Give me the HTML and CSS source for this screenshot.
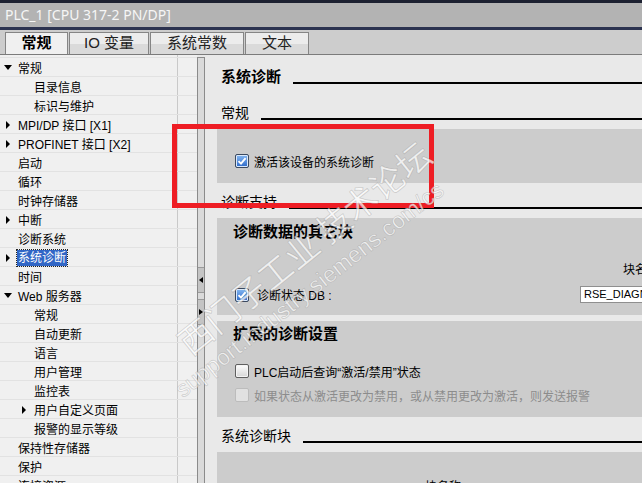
FILE: index.html
```html
<!DOCTYPE html>
<html lang="zh-CN">
<head>
    <meta charset="UTF-8">
    <meta name="viewport" content="width=device-width, initial-scale=1.0">
    <title>PLC_1 属性</title>
    <link rel="stylesheet" href="styles.css">
</head>
<body>
    <div id="win">
        <div class="title">PLC_1 [CPU 317-2 PN/DP]</div>
        <ul class="tabs">
            <li class="on tab-gen">常规</li>
            <li class="tab-io">IO 变量</li>
            <li class="tab-const">系统常数</li>
            <li class="tab-text">文本</li>
        </ul>

        <div class="main">
            <ul class="tree">
                <li><i class="down"></i>常规</li>
                <li class="l1"><i></i>目录信息</li>
                <li class="l1"><i></i>标识与维护</li>
                <li><i class="right"></i>MPI/DP 接口 [X1]</li>
                <li><i class="right"></i>PROFINET 接口 [X2]</li>
                <li><i></i>启动</li>
                <li><i></i>循环</li>
                <li><i></i>时钟存储器</li>
                <li><i class="right"></i>中断</li>
                <li><i></i>诊断系统</li>
                <li><i class="right"></i><span class="sel">系统诊断</span></li>
                <li><i></i>时间</li>
                <li><i class="down"></i>Web 服务器</li>
                <li class="l1"><i></i>常规</li>
                <li class="l1"><i></i>自动更新</li>
                <li class="l1"><i></i>语言</li>
                <li class="l1"><i></i>用户管理</li>
                <li class="l1"><i></i>监控表</li>
                <li class="l1"><i class="right"></i>用户自定义页面</li>
                <li class="l1"><i></i>报警的显示等级</li>
                <li><i></i>保持性存储器</li>
                <li><i></i>保护</li>
                <li><i></i>连接资源</li>
            </ul>

            <div class="split">
                <span class="sbtn"><i class="left"></i></span>
                <span class="sbtn"><i class="rgt"></i></span>
            </div>

            <div class="content">
                <div class="sec first"><b>系统诊断</b><span class="rule"></span></div>
                <div class="sec gap"><span>常规</span><span class="rule"></span></div>
                <div class="panel p1">
                    <div class="chk">
                        <span class="cb on"><svg viewBox="0 0 12 12"><path d="M2.5 6.2 L5 8.7 L9.6 3.2" /></svg></span>
                        激活该设备的系统诊断
                    </div>
                </div>

                <div class="sec"><span>诊断支持</span><span class="rule"></span></div>
                <div class="panel p2">
                    <div class="ptitle">诊断数据的其它块</div>
                    <div class="dbrow">
                        <div class="chk tall">
                            <span class="cb on"><svg viewBox="0 0 12 12"><path d="M2.5 6.2 L5 8.7 L9.6 3.2" /></svg></span>
                            <span class="lbl">诊断状态 DB :</span>
                        </div>
                        <div class="field">
                            <div class="flabel">块名称</div>
                            <div class="inp">RSE_DIAGNOSTIC_STATUS_DB</div>
                        </div>
                    </div>
                </div>

                <div class="panel p3">
                    <div class="ptitle">扩展的诊断设置</div>
                    <div class="chk row1">
                        <span class="cb"></span>
                        PLC启动后查询“激活/禁用”状态
                    </div>
                    <div class="chk row2 dis">
                        <span class="cb"></span>
                        如果状态从激活更改为禁用，或从禁用更改为激活，则发送报警
                    </div>
                </div>

                <div class="sec"><span>系统诊断块</span><span class="rule"></span></div>
                <div class="panel p4">
                    <div class="colname">块名称</div>
                </div>
            </div>
        </div>

        <!-- 标注框 -->
        <div class="mark"></div>
        <div class="wm wm1">西门子工业 技术论坛</div>
        <div class="wm wm2">support.industry.siemens.com/cs</div>
    </div>
</body>
</html>
```

FILE: styles.css
```css
* {
    margin: 0;
    padding: 0;
    box-sizing: border-box;
}

body {
    width: 642px;
    height: 483px;
    overflow: hidden;
    background: #e9e9e9;
    font: 12px "Liberation Sans", "Noto Sans CJK SC", sans-serif;
    color: #000;
}

#win {
    position: relative;
    width: 642px;
    height: 483px;
    overflow: hidden;
    display: flex;
    flex-direction: column;
}

.title {
    flex: none;
    height: 30px;
    border-top: 3px solid #1d2131;
    border-bottom: 3px solid #2c3350;
    background: #b3b3b3;
    color: #f6f6f6;
    font: 14px "Noto Sans", sans-serif;
    line-height: 24px;
    padding-left: 5px;
}

.tabs {
    flex: none;
    list-style: none;
    display: flex;
    gap: 1px;
    height: 25px;
    padding: 2px 0 0 5px;
    background: #cdcdcd;
    border-bottom: 1px solid #7b7b7b;
}

.tabs li {
    height: 22px;
    border: 1px solid #858585;
    border-bottom: 0;
    background: linear-gradient(#ececec 50%, #dadada 50%);
    font-size: 15px;
    line-height: 20px;
    text-align: center;
    color: #222;
}

.tabs li.on {
    background: #f0f0f0;
    font-weight: bold;
    color: #000;
}

.tab-gen { width: 63px; }
.tab-io { width: 80px; }
.tab-const { width: 94px; }
.tab-text { width: 64px; }

.main {
    flex: 1;
    min-height: 0;
    display: flex;
}

/* 左侧导航树 */
.tree {
    flex: none;
    width: 197px;
    list-style: none;
    padding-top: 2px;
    overflow: hidden;
    background: linear-gradient(to right, transparent 177px, #c9c9c9 177px, #c9c9c9 178px, transparent 178px), #f0f0f0;
}

.tree li {
    height: 19px;
    border-top: 1px solid #e2e2e2;
    display: flex;
    align-items: center;
    padding: 1px 0 0 4px;
    white-space: nowrap;
}

.tree li.l1 {
    padding-left: 20px;
}

.tree i {
    flex: none;
    width: 14px;
    display: flex;
    align-items: center;
}

.tree i.down::before {
    content: "";
    border-left: 4px solid transparent;
    border-right: 4px solid transparent;
    border-top: 5px solid #000;
}

.tree i.right::before {
    content: "";
    margin-left: 2px;
    border-top: 4px solid transparent;
    border-bottom: 4px solid transparent;
    border-left: 4px solid #000;
}

.tree .sel {
    background: #3166c6;
    color: #fff;
    outline: 1px dotted #222;
    margin-left: -1px;
    padding: 0 1px;
    line-height: 16px;
}

.split {
    flex: none;
    width: 8px;
    margin-top: 2px;
    border: 1px solid #8b8b8b;
    border-bottom: 0;
    background: #dadada;
    display: flex;
    flex-direction: column;
    padding-top: 209px;
}

.sbtn {
    height: 26px;
    border-top: 1px solid #9a9a9a;
    border-bottom: 1px solid #9a9a9a;
    background: #c4c4c4;
    display: flex;
    align-items: center;
    justify-content: center;
}

.sbtn + .sbtn {
    margin-top: 6px;
}

.sbtn .left {
    border-top: 3px solid transparent;
    border-bottom: 3px solid transparent;
    border-right: 4px solid #000;
}

.sbtn .rgt {
    border-top: 3px solid transparent;
    border-bottom: 3px solid transparent;
    border-left: 4px solid #000;
}

/* 右侧属性区 */
.content {
    flex: 1;
    min-width: 0;
    padding-left: 12px;
    overflow: hidden;
    background: #e9e9e9;
}

.sec {
    display: flex;
    align-items: flex-start;
    height: 20px;
    margin-top: 9px;
    padding-left: 4px;
    font-size: 14px;
    line-height: 20px;
    white-space: nowrap;
}

.sec.first {
    margin-top: 12px;
}

.sec.first b {
    font-size: 15px;
}

.sec.gap {
    margin-top: 16px;
}

.rule {
    flex: 1;
    border-top: 2px solid #000;
    margin: 15px 0 0 12px;
}

.panel {
    background: #cccccc;
    margin-top: 6px;
    overflow: hidden;
}

.p1 {
    height: 54px;
    padding: 25px 0 0 18px;
}

.p2 {
    padding: 4px 0 12px;
}

.p3 {
    padding: 3px 0 15px;
}

.p4 {
    height: 40px;
    padding-top: 25px;
}

.ptitle {
    font-size: 15px;
    font-weight: bold;
    line-height: 20px;
    padding-left: 16px;
}

.chk {
    display: flex;
    align-items: center;
    gap: 5px;
    height: 14px;
    white-space: nowrap;
}

.chk.tall {
    height: 17px;
}

.chk .lbl {
    margin-left: 3px;
}

.p3 .chk {
    padding-left: 18px;
}

.p3 .row1 {
    margin-top: 20px;
}

.p3 .row2 {
    margin-top: 10px;
}

.chk.dis {
    color: #8c8c8c;
}

.cb {
    flex: none;
    width: 14px;
    height: 14px;
    border: 1px solid #5f5f5f;
    border-radius: 2px;
    background: linear-gradient(#fdfdfd, #d6d6d6);
    box-shadow: inset 0 0 0 1px #f4f4f4;
}

.cb.on {
    border-color: #3b4a60;
    background: linear-gradient(#86b8f2, #2c69c9);
    box-shadow: inset 0 0 0 1px #dbe9fb;
    display: flex;
    align-items: center;
    justify-content: center;
}

.cb svg {
    width: 12px;
    height: 12px;
}

.cb path {
    fill: none;
    stroke: #fff;
    stroke-width: 1.9;
}

.dis .cb {
    border-color: #bcbcbc;
    background: #e1e1e1;
    box-shadow: none;
}

.dbrow {
    display: flex;
    align-items: flex-end;
    margin-top: 18px;
    padding-left: 18px;
}

.field {
    margin-left: auto;
    width: 62px;
    flex: none;
    white-space: nowrap;
}

.flabel {
    line-height: 20px;
    padding-left: 43px;
}

.inp {
    margin-top: 6px;
    width: 150px;
    height: 17px;
    border: 1px solid #8f8f8f;
    background: #fff;
    font: 11px "Liberation Sans", sans-serif;
    line-height: 15px;
    padding-left: 3px;
}

.colname {
    padding-left: 208px;
    line-height: 20px;
}

.mark {
    position: absolute;
    left: 172px;
    top: 124px;
    width: 262px;
    height: 84px;
    border: 5px solid #ee1d24;
}

.wm {
    position: absolute;
    white-space: nowrap;
    color: rgba(255, 255, 255, 0.7);
    -webkit-text-stroke: 0.8px rgba(120, 120, 120, 0.3);
    transform-origin: 0 50%;
    pointer-events: none;
}

.wm1 {
    left: 182px;
    top: 326px;
    font: 34px "Noto Sans CJK SC", sans-serif;
    line-height: 40px;
    transform: rotate(-39deg);
}

.wm2 {
    left: 178px;
    top: 378px;
    font: 23px "Liberation Sans", sans-serif;
    line-height: 28px;
    transform: rotate(-38deg);
}
```
